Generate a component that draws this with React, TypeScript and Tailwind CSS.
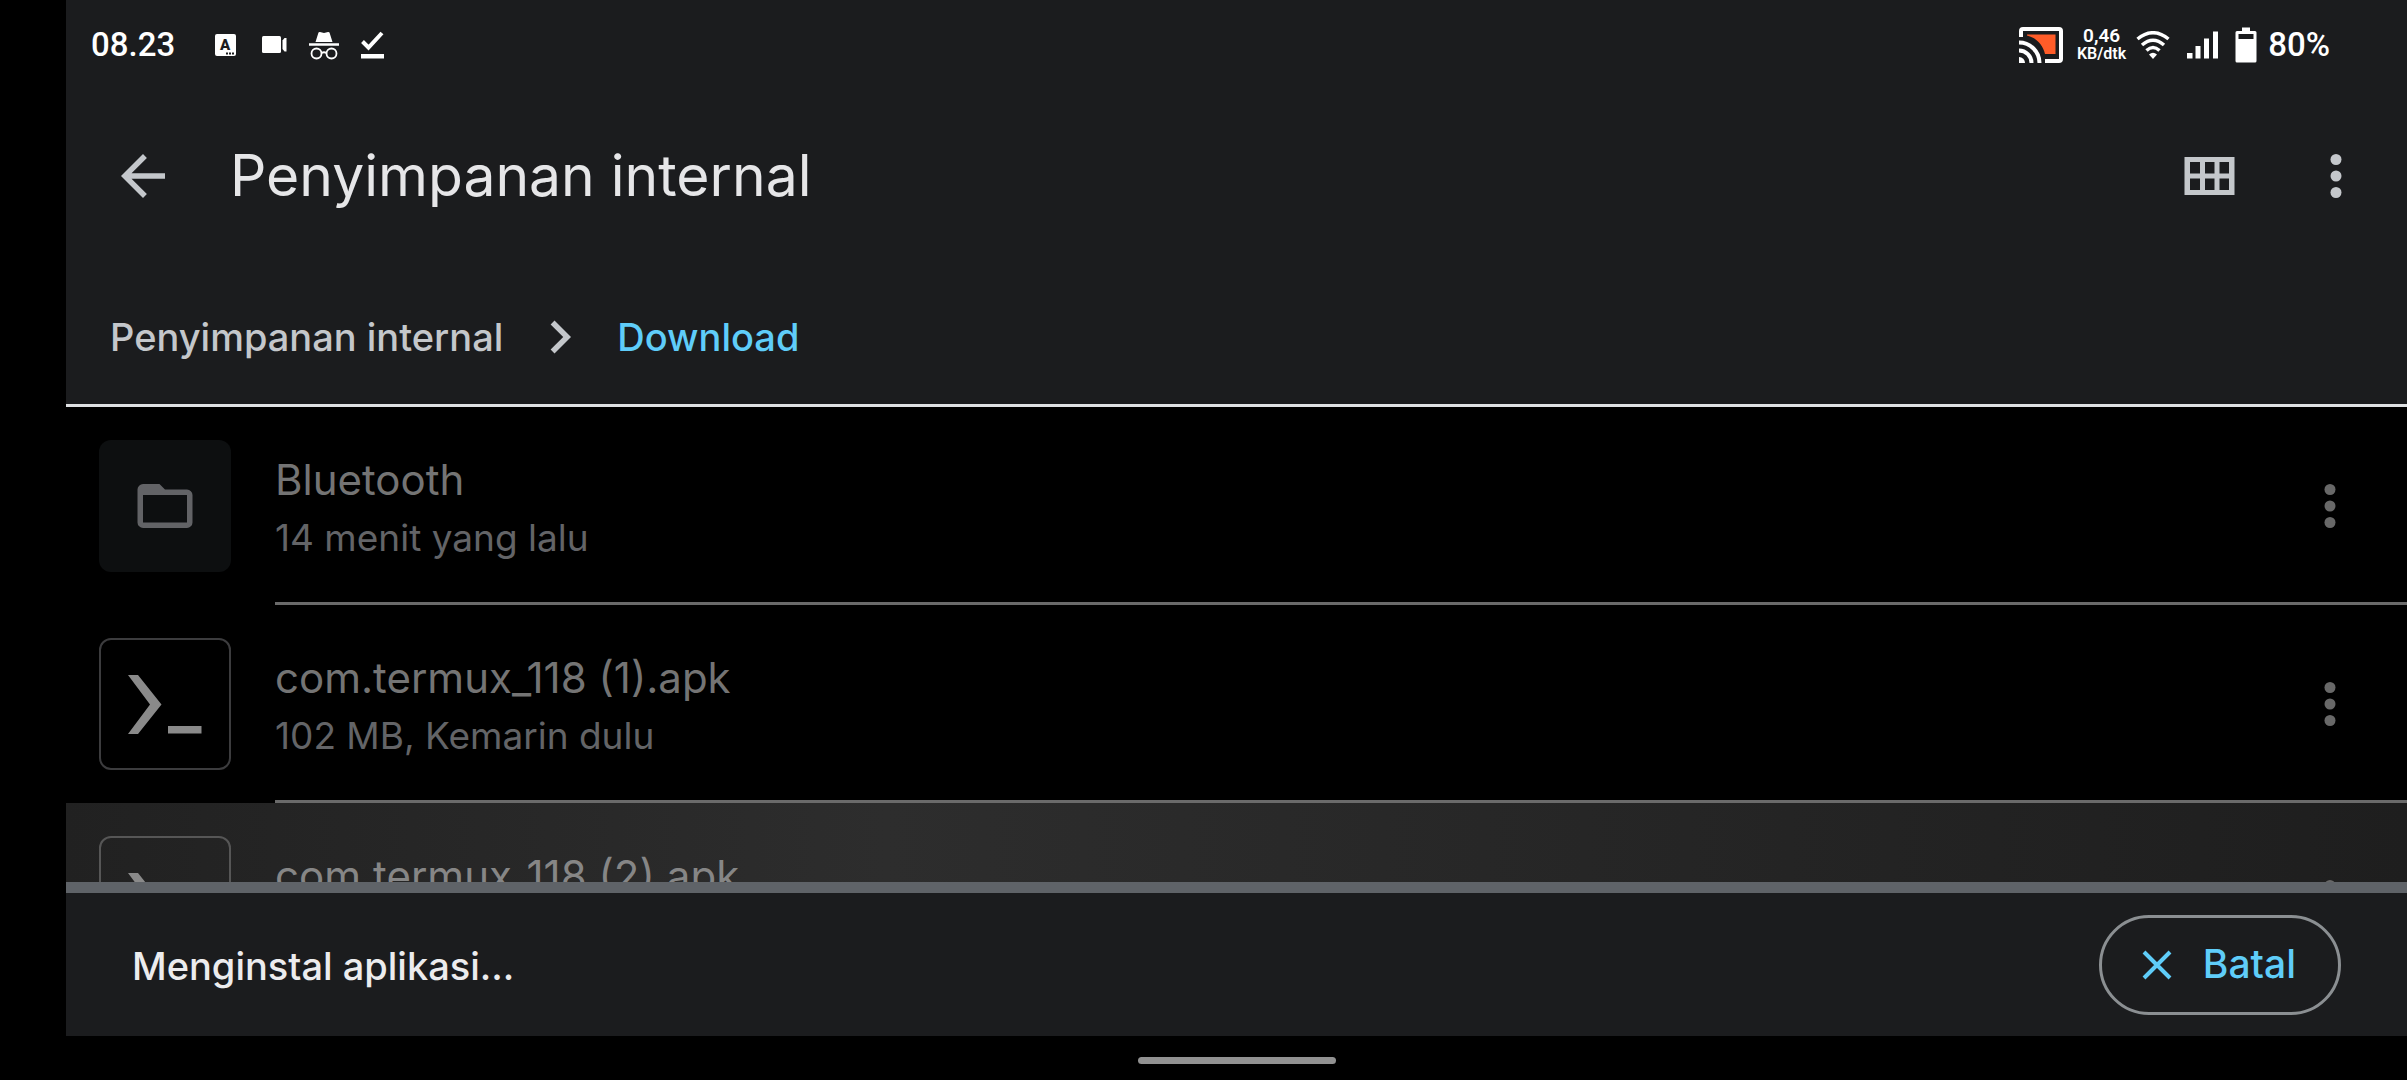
function KeyboardIcon() {
  return (
    <svg width="21" height="22" viewBox="0 0 21 22" className="mr-1 shrink-0" aria-hidden="true">
      <rect width="21" height="22" rx="2" fill="#fff" />
      <text x="10" y="16" textAnchor="middle" fontFamily="Roboto, sans-serif" fontSize="15" fontWeight="900" fill="#1b1c1e">
        A
      </text>
      <path d="M11 18.5h2v2h-2zM14 18.5h2v2h-2zM17 18.5h2v2h-2z" fill="#1b1c1e" />
    </svg>
  );
}

function VideoIcon() {
  return (
    <svg width="25" height="18" viewBox="0 0 25 18" fill="#fff" className="shrink-0" aria-hidden="true">
      <rect width="19" height="17" rx="1.5" />
      <path d="M20.5 4.5 22.5 2H24.5V15.5H22.5L20.5 13Z" />
    </svg>
  );
}

function IncognitoIcon() {
  return (
    <svg width="30" height="29" viewBox="0 0 30 29" fill="none" className="shrink-0" aria-hidden="true">
      <path d="M6.5 11 9.5 1.5Q10 .8 11 1L15 2 19 1Q20 .8 20.500 1.500L23.500 11Z" fill="#fff" />
      <path d="M0 13.500H30" stroke="#fff" strokeWidth="2.500" />
      <circle cx="7.500" cy="22.500" r="5" stroke="#fff" strokeWidth="1.800" />
      <circle cx="22.500" cy="22.500" r="5" stroke="#fff" strokeWidth="1.800" />
      <path d="M12.500 22Q15 20.500 17.500 22" stroke="#fff" strokeWidth="1.800" />
    </svg>
  );
}

function CheckIcon() {
  return (
    <svg width="23" height="28" viewBox="0 0 23 28" className="shrink-0" aria-hidden="true">
      <path d="M1.500 10.500 7.500 16.500 21 2" fill="none" stroke="#fff" strokeWidth="4" />
      <path d="M0 23H23V27.500H0Z" fill="#fff" />
    </svg>
  );
}

function CastIcon() {
  return (
    <svg width="44" height="36" viewBox="0 0 44 36" fill="none" className="mr-[14px] shrink-0" aria-hidden="true">
      <path d="M8 7.500H36.500V27H26C24 18 17 10.500 8 8.500Z" fill="#ff5c28" />
      <path d="M2 10V4Q2 2 4 2H40Q42 2 42 4V32Q42 34 40 34H26" stroke="#fff" strokeWidth="4" />
      <path d="M0 15.500A20.500 20.500 0 0 1 20.500 36M0 23.500A12.500 12.500 0 0 1 12.500 36" stroke="#fff" strokeWidth="4" />
      <path d="M0 30A6 6 0 0 1 6 36H0Z" fill="#fff" />
    </svg>
  );
}

function WifiIcon() {
  return (
    <svg width="34" height="28" viewBox="0 0 34 28" fill="none" stroke="#fff" strokeWidth="3.500" className="mr-[17px] shrink-0" aria-hidden="true">
      <path d="M1.500 8Q17-4.500 32.500 8M6 14Q17 4.500 28 14M10.500 19.500Q17 13.500 23.500 19.500" />
      <path d="M13 23.500Q17 20 21 23.500L17 28Z" fill="#fff" stroke="none" />
    </svg>
  );
}

function SignalIcon() {
  return (
    <svg width="31" height="28" viewBox="0 0 31 28" fill="#fff" className="mr-[17px] shrink-0" aria-hidden="true">
      <path d="M0 22H5.500V27.500H0ZM8.500 15H13.500V27.500H8.500ZM17 7.500H22V27.500H17ZM26 .5H31V27.500H26Z" />
    </svg>
  );
}

function BatteryIcon() {
  return (
    <svg width="22" height="36" viewBox="0 0 22 36" className="mr-[11px] shrink-0" aria-hidden="true">
      <path
        fill="#fff"
        fillRule="evenodd"
        d="M7 .5H15V4H20Q21.500 4 21.500 5.500V34Q21.500 35.500 20 35.500H2Q.5 35.500 .5 34V5.500Q.5 4 2 4H7ZM3.500 7V12H18.500V7Z"
      />
    </svg>
  );
}

function MoreIcon() {
  return (
    <svg width="66" height="66" viewBox="0 0 24 24" fill="currentColor" aria-hidden="true">
      <circle cx="12" cy="6" r="2" />
      <circle cx="12" cy="12" r="2" />
      <circle cx="12" cy="18" r="2" />
    </svg>
  );
}

function TermuxIcon() {
  return (
    <svg width="132" height="132" viewBox="0 0 132 132" fill="#8a8a8a" aria-hidden="true">
      <path d="M29 37H39L62.500 66.500 39 96H29L51 66.500ZM69 88H102.500V95.500H69Z" />
    </svg>
  );
}

function FolderIcon() {
  return (
    <svg width="66" height="66" viewBox="0 0 24 24" fill="#626366" aria-hidden="true">
      <path d="M4 20Q3.200 20 2.600 19.400 2 18.800 2 18V6Q2 5.200 2.600 4.600 3.200 4 4 4H10L12 6H20Q20.800 6 21.400 6.600 22 7.200 22 8V18Q22 18.800 21.400 19.400 20.800 20 20 20ZM4 18H20V8H4Z" />
    </svg>
  );
}

type FileRowProps = { name: string; detail?: string; folder?: boolean; highlighted?: boolean };

function FileRow({ name, detail, folder, highlighted }: FileRowProps) {
  return (
    <li
      className={
        highlighted
          ? "flex h-[198px] items-center bg-linear-to-r from-[#212121] via-[#2d2d2d] via-35% to-[#1e1e1e] pl-[33px] text-[#868686]"
          : "flex h-[198px] items-center pl-[33px] text-[#747474]"
      }
    >
      <div
        className={
          folder
            ? "mr-11 flex size-[132px] shrink-0 items-center justify-center rounded-xl bg-[#0d0f10]"
            : highlighted
              ? "mr-11 flex size-[132px] shrink-0 items-center justify-center rounded-xl outline-2 -outline-offset-2 outline-[#565656]"
              : "mr-11 flex size-[132px] shrink-0 items-center justify-center rounded-xl outline-2 -outline-offset-2 outline-[#3c3c3e]"
        }
      >
        {folder ? <FolderIcon /> : <TermuxIcon />}
      </div>
      <div className="flex min-w-0 flex-1 items-center self-stretch border-b-3 border-[#6a6a6a] pt-[3px] pr-11">
        <div className="min-w-0 flex-1 self-start pt-[41px]">
          <p className="truncate text-[42px] leading-[58px]">{name}</p>
          {detail && <p className="truncate text-[37px] leading-[58px] text-[#636467]">{detail}</p>}
        </div>
        <button type="button" aria-label={`Opsi lainnya untuk ${name}`} className="shrink-0 text-[#686868]">
          <MoreIcon />
        </button>
      </div>
    </li>
  );
}

export default function App() {
  return (
    <div className="flex h-screen flex-col overflow-hidden bg-black pl-[66px] font-['Inter',sans-serif]">
      <header className="shrink-0 border-b-3 border-[#dfe1e3] bg-[#1b1c1e]">
        <div className="flex h-[90px] items-center justify-between pr-[77px] pl-[25px] font-['Roboto',sans-serif] text-[33px] font-medium text-white">
          <div className="flex items-center">
            <span className="mr-10">08.23</span>
            <div className="flex items-center gap-[22px]">
              <KeyboardIcon />
              <VideoIcon />
              <IncognitoIcon />
              <CheckIcon />
            </div>
          </div>
          <div className="flex items-center">
            <CastIcon />
            <div className="mr-[10px] text-center text-base leading-[18px] font-semibold">
              <p className="text-[19px] leading-[18px]">0,46</p>
              <p>KB/dtk</p>
            </div>
            <WifiIcon />
            <SignalIcon />
            <BatteryIcon />
            <span>80%</span>
          </div>
        </div>

        <div className="flex h-[172px] items-center pr-[38px] pl-11 text-[#c4c7cb]">
          <button type="button" aria-label="Kembali" className="mr-[54px]">
            <svg width="66" height="66" viewBox="0 0 24 24" fill="currentColor" aria-hidden="true">
              <path d="M20 11H7.830l5.590-5.590L12 4l-8 8 8 8 1.410-1.410L7.830 13H20z" />
            </svg>
          </button>
          <h1 className="flex-1 text-[57px] leading-[72px] text-[#e6e6e8]">Penyimpanan internal</h1>
          <button type="button" aria-label="Tampilan petak" className="mr-[61px]">
            <svg width="66" height="66" viewBox="0 0 66 66" aria-hidden="true">
              <path
                fill="currentColor"
                fillRule="evenodd"
                d="M8.500 14H58.500V52H8.500ZM14 19V30.500H24V19ZM29 19V30.500H38.500V19ZM43.500 19V30.500H53V19ZM14 35.500V47H24V35.500ZM29 35.500V47H38.500V35.500ZM43.500 35.500V47H53V35.500Z"
              />
            </svg>
          </button>
          <button type="button" aria-label="Opsi lainnya">
            <MoreIcon />
          </button>
        </div>

        <nav aria-label="Lokasi" className="flex h-[142px] items-center gap-6 pt-2 pl-11 text-[38px] font-medium text-[#c4c7cb]">
          <a href="#internal">Penyimpanan internal</a>
          <svg width="66" height="66" viewBox="0 0 24 24" fill="currentColor" aria-hidden="true">
            <path d="M10 6 8.590 7.410 13.170 12l-4.580 4.590L10 18l6-6z" />
          </svg>
          <a href="#download" aria-current="page" className="text-[#5fcdf9]">
            Download
          </a>
        </nav>
      </header>

      <ul className="min-h-0 flex-1 overflow-hidden">
        <FileRow name="Bluetooth" detail="14 menit yang lalu" folder />
        <FileRow name="com.termux_118 (1).apk" detail="102 MB, Kemarin dulu" />
        <FileRow name="com.termux_118 (2).apk" highlighted />
      </ul>

      <section className="shrink-0 border-t-11 border-[#5f6368] bg-[#1b1c1e]">
        <div className="flex h-[143px] items-center justify-between px-[66px]">
          <p role="status" className="pt-1 text-[38px] font-medium text-[#ececee]">
            Menginstal aplikasi...
          </p>
          <button
            type="button"
            className="flex h-[100px] items-center rounded-full border-3 border-[#8b8f92] pr-[42px] pl-[39px] text-[39px] font-medium text-[#5fcdf9]"
          >
            <svg width="32" height="32" viewBox="0 0 32 32" fill="none" stroke="currentColor" strokeWidth="4" className="mr-[30px]" aria-hidden="true">
              <path d="M3 3 29 29M29 3 3 29" />
            </svg>
            Batal
          </button>
        </div>
      </section>

      <footer className="flex h-11 shrink-0 items-center justify-center pt-1">
        <div className="h-[7px] w-[198px] rounded-full bg-[#919191]" />
      </footer>
    </div>
  );
}
